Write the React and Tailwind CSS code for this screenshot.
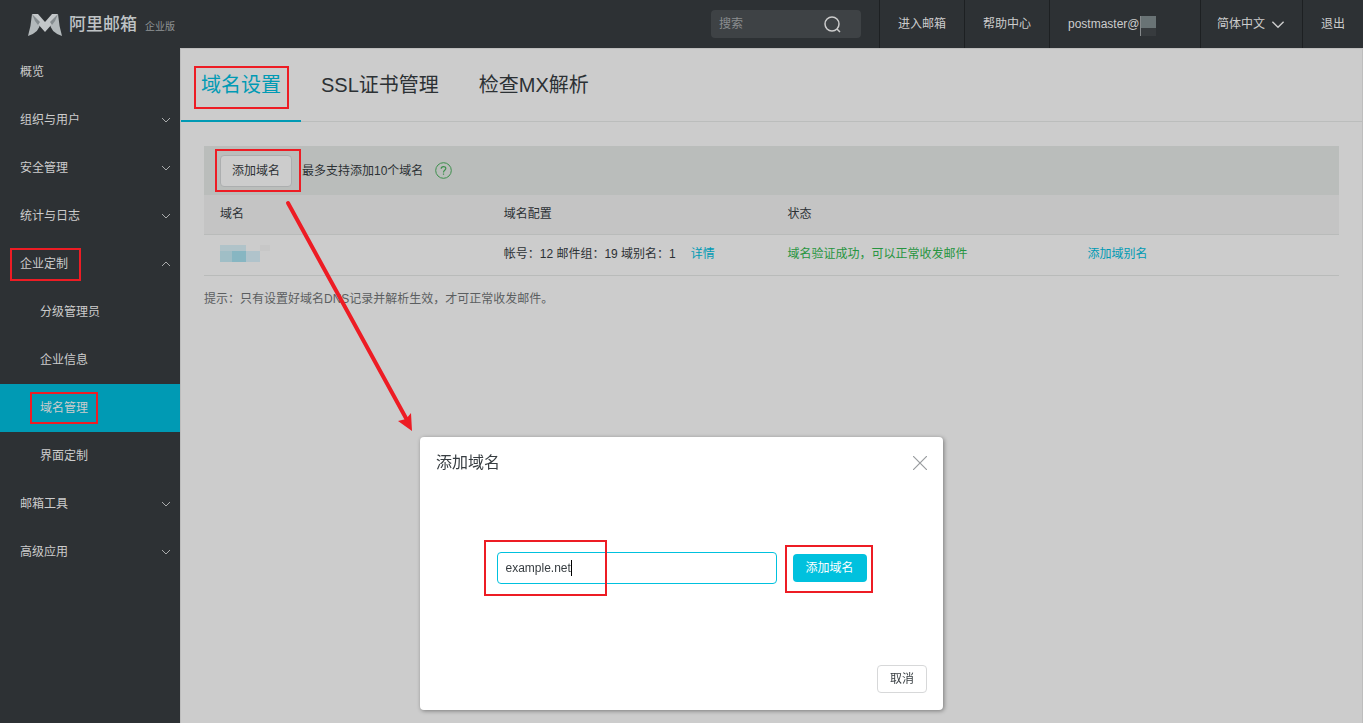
import React, { useState } from 'react';
import clsx from 'clsx';

const MENU = [
  { label: '概览' },
  { label: '组织与用户', expandable: true },
  { label: '安全管理', expandable: true },
  { label: '统计与日志', expandable: true },
  {
    label: '企业定制',
    expandable: true,
    open: true,
    marked: true,
    children: [
      { label: '分级管理员' },
      { label: '企业信息' },
      { label: '域名管理', active: true },
      { label: '界面定制' },
    ],
  },
  { label: '邮箱工具', expandable: true },
  { label: '高级应用', expandable: true },
];

const TABS = ['域名设置', 'SSL证书管理', '检查MX解析'];

// red frame laid over the element that holds it
const Mark = ({ className }) => (
  <span className={clsx('absolute border-2 border-[#ed1c24] pointer-events-none', className)} />
);

const Chevron = ({ up, className }) => (
  <svg viewBox="0 0 10 6" className={className} fill="none" stroke="currentColor" strokeWidth="1">
    <path d={up ? 'M1 5 L5 1 L9 5' : 'M1 1 L5 5 L9 1'} />
  </svg>
);

const Logo = () => (
  <a href="#" className="flex items-center pt-[2px] pl-7 text-[#bfc3c5]">
    <svg width="34" height="22" viewBox="0 0 34 22" className="mr-[7px]">
      <path d="M4 0 L12 9 Q12 18 0 22 Q3 12 4 0 Z" fill="#b3b9bb" />
      <path d="M30 0 L22 9 Q22 18 34 22 Q31 12 30 0 Z" fill="#b3b9bb" />
      <path d="M4 0 L10 0 L17 8 L24 0 L30 0 L25 9 L17 18 L9 9 Z" fill="#c3c7c9" />
      <path d="M4 0 L12 8 L10 11 L7 7 Z" fill="#858c8f" />
      <path d="M30 0 L22 8 L24 11 L27 7 Z" fill="#858c8f" />
    </svg>
    <span className="text-[17px] font-medium">阿里邮箱</span>
    <span className="ml-2 pt-[3px] text-[10px] text-[#8f9496]">企业版</span>
  </a>
);

const Header = () => (
  <header className="flex h-12 justify-between bg-[#2d3134] text-xs text-[#cccccc]">
    <Logo />
    <div className="flex">
      <div className="mr-[18px] flex h-7 w-[150px] items-center self-center rounded bg-[#3e4245] pr-5">
        <input
          type="text"
          aria-label="搜索"
          placeholder="搜索"
          className="min-w-0 flex-1 bg-transparent pl-2 outline-none placeholder:text-[#8a8d8f]"
        />
        <button aria-label="搜索">
          <svg width="18" height="18" viewBox="0 0 18 18" fill="none" stroke="#cccccc" strokeWidth="1.5">
            <circle cx="9" cy="9" r="7" />
            <path d="M14 14 L17 17" />
          </svg>
        </button>
      </div>
      <a href="#" className="flex items-center border-l border-[#1d2022] px-[18px]">进入邮箱</a>
      <a href="#" className="flex items-center border-l border-[#1d2022] px-[18px]">帮助中心</a>
      <a href="#" className="flex w-[151px] items-center border-l border-[#1d2022] pl-[18px]">
        postmaster@
        <span className="mt-[3px] flex h-5 w-4 flex-col border-l border-[#85898b]">
          <span className="h-3 bg-[#697375]" />
          <span className="h-2 bg-[#373b3e]" />
        </span>
      </a>
      <button className="flex w-[102px] items-center gap-[6px] border-l border-[#1d2022] pl-4">
        简体中文
        <Chevron className="h-[9px] w-[14px]" />
      </button>
      <a href="#" className="flex items-center border-l border-[#1d2022] px-[18px]">退出</a>
    </div>
  </header>
);

const Sidebar = () => (
  <nav className="w-[180px] shrink-0 bg-[#2d3134] text-xs text-[#cccccc]">
    <ul>
      {MENU.map((item) => (
        <li key={item.label}>
          <a href="#" className="flex h-12 items-center justify-between pl-5 pr-[9px]">
            <span className="relative leading-4">
              {item.label}
              {item.marked && <Mark className="-top-2 -right-[13px] -bottom-[9px] -left-[10px]" />}
            </span>
            {item.expandable && <Chevron up={item.open} className="h-[6px] w-[10px] text-[#a9abac]" />}
          </a>
          {item.children && (
            <ul>
              {item.children.map((child) => (
                <li key={child.label}>
                  <a href="#" className={clsx('flex h-12 items-center pl-10', child.active && 'bg-[#009ab4]')}>
                    <span className="relative leading-4">
                      {child.label}
                      {child.active && <Mark className="-inset-y-2 -inset-x-[10px]" />}
                    </span>
                  </a>
                </li>
              ))}
            </ul>
          )}
        </li>
      ))}
    </ul>
  </nav>
);

const DomainTable = () => (
  <table className="w-full table-fixed text-left">
    <colgroup>
      <col className="w-1/4" />
      <col className="w-1/4" />
      <col className="w-[300px]" />
      <col />
    </colgroup>
    <thead>
      <tr className="h-[39px] border-b border-[#b9bbba] bg-[#c4c4c4]">
        <th className="pl-4 font-normal">域名</th>
        <th className="pl-4 font-normal">域名配置</th>
        <th className="pl-4 font-normal">状态</th>
        <th aria-label="操作" />
      </tr>
    </thead>
    <tbody>
      <tr className="h-[41px] border-b border-[#b9bbba]">
        <td className="pb-[2px] pl-4">
          <div className="grid w-[50px] grid-cols-[12px_14px_14px_10px] grid-rows-[6px_11px]">
            <span className="col-span-2 bg-[#b0c3c9]" />
            <span />
            <span className="bg-[#c7c7c7]" />
            <span className="bg-[#a0bec6]" />
            <span className="bg-[#87b6c2]" />
            <span className="bg-[#b0c3cb]" />
          </div>
        </td>
        <td className="pb-[2px] pl-4">
          帐号：12 邮件组：19 域别名：1
          <a href="#" className="ml-[15px] text-[#009ab4]">详情</a>
        </td>
        <td className="pb-[2px] pl-4 text-[#279540]">域名验证成功，可以正常收发邮件</td>
        <td className="pb-[2px] pl-4">
          <a href="#" className="text-[#009ab4]">添加域别名</a>
        </td>
      </tr>
    </tbody>
  </table>
);

const AddDomainDialog = () => {
  const [domain, setDomain] = useState('example.net');

  return (
    <div className="fixed inset-0 flex items-end justify-center pb-[13px]">
      <div
        role="dialog"
        aria-labelledby="dialog-title"
        className="flex h-[273px] w-[523px] flex-col rounded bg-white px-4 pb-[17px] shadow-[1px_1px_4px_rgba(0,0,0,0.4)]"
      >
        <div className="flex h-[52px] items-center justify-between">
          <h2 id="dialog-title" className="text-base text-[#373d41]">添加域名</h2>
          <button aria-label="关闭">
            <svg width="14" height="14" viewBox="0 0 14 14" stroke="#999c9f" strokeWidth="1.2">
              <path d="M0 0 L14 14 M14 0 L0 14" />
            </svg>
          </button>
        </div>
        <div className="flex flex-1 items-center justify-center gap-4 pb-[19px]">
          <div className="relative">
            <input
              type="text"
              aria-label="域名"
              value={domain}
              onChange={(e) => setDomain(e.target.value)}
              className="h-8 w-[280px] rounded border border-[#00c1de] px-2 text-[#373d41] caret-transparent outline-none"
            />
            <span className="absolute top-2 left-[74px] h-4 w-px bg-black" />
            <Mark className="-top-3 -bottom-3 -left-[13px] w-[123px]" />
          </div>
          <button className="relative h-7 w-[74px] rounded bg-[#00c1de] text-white">
            添加域名
            <Mark className="-top-[9px] -right-[6px] -bottom-[11px] -left-2" />
          </button>
        </div>
        <button className="h-7 w-[50px] self-end rounded border border-[#d7d8d9] text-[#373d41]">取消</button>
      </div>
    </div>
  );
};

const App = () => {
  const [tab, setTab] = useState(TABS[0]);

  return (
    <div className="relative flex min-h-screen flex-col bg-[#cccccc] font-['Liberation_Sans','Noto_Sans_CJK_SC',sans-serif] text-xs text-[#2c3134]">
      <Header />
      <div className="flex flex-1">
        <Sidebar />
        <main className="min-w-0 flex-1 border-t border-l border-r border-[#bdbdbd]">
          <div className="flex h-[73px] border-b border-[#bbbdbc]">
            {TABS.map((name) => (
              <button
                key={name}
                onClick={() => setTab(name)}
                className={clsx(
                  '-mb-px border-b-2 px-5 text-xl',
                  name === tab ? 'border-[#009ab4] text-[#009ab4]' : 'border-transparent'
                )}
              >
                <span className="relative block leading-7">
                  {name}
                  {name === tab && <Mark className="-top-[5px] -right-2 -bottom-[10px] -left-[7px]" />}
                </span>
              </button>
            ))}
          </div>

          <div className="px-[23px] pt-6">
            <div className="flex h-[49px] items-center bg-[#babdbb] px-4">
              <button className="relative h-8 w-[72px] rounded border border-[#acaeaf] bg-[#cccccc]">
                添加域名
                <Mark className="-top-[7px] -right-[10px] -bottom-[6px] -left-[6px]" />
              </button>
              <span className="ml-[10px]">最多支持添加10个域名</span>
              <svg width="17" height="17" viewBox="0 0 17 17" fill="none" stroke="#3d8f4c" className="ml-3">
                <circle cx="8.5" cy="8.5" r="7.8" />
                <path d="M6.2 6.8 C6.2 3.9 10.8 3.9 10.8 6.6 C10.8 8.3 8.5 8.3 8.5 10.4 M8.5 11.6 V12.8" strokeWidth="1.2" />
              </svg>
            </div>
            <DomainTable />
            <p className="mt-[15px] text-[#5b5e60]">提示：只有设置好域名DNS记录并解析生效，才可正常收发邮件。</p>
          </div>
        </main>
      </div>

      <AddDomainDialog />

      {/* pointer from the toolbar button to the dialog */}
      <svg width="130" height="232" viewBox="0 0 130 232" className="pointer-events-none absolute top-[200px] left-[284px]">
        <path d="M4 3 L123 220" stroke="#ed1c24" strokeWidth="4" strokeLinecap="round" />
        <path d="M128 231 L114 221 L122 219 L127 213 Z" fill="#ed1c24" />
      </svg>
    </div>
  );
};

export default App;
